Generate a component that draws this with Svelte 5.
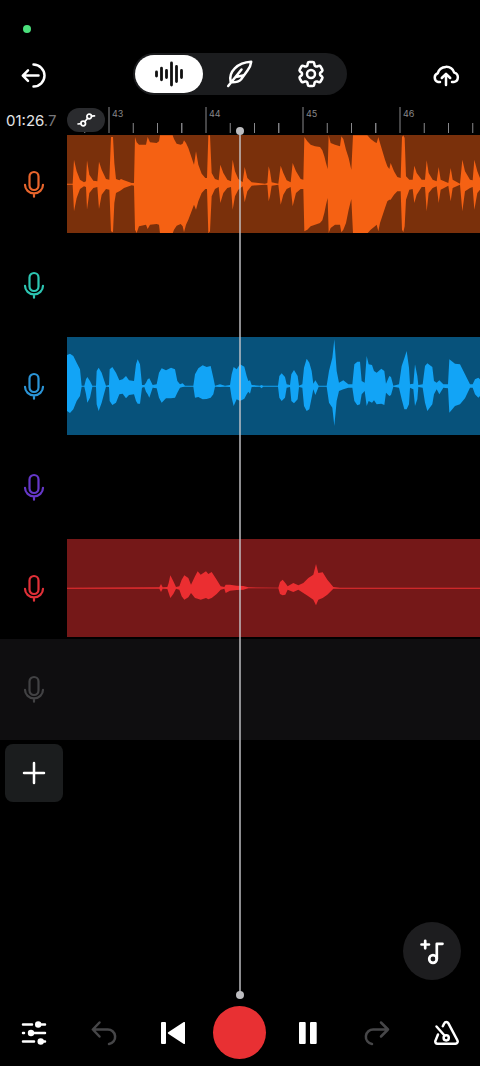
<script>
  const BARS = [43, 44, 45, 46];
  const BAR_WIDTH = 97;
  const FIRST_BAR = 42;
  const VIEW_WIDTH = 413;

  const pct = (x) => `${(x / VIEW_WIDTH) * 100}%`;

  // each peak: x, top, bottom. Three units per pixel
  const tracks = [
    {
      name: 'Vocals 1', color: '#e8652c', tone: 'orange',
      takes: [
        { start: -21, axis: 163, peaks: [
          [21,162,165],[38,162,165],[42,90,245],[50,125,205],[60,150,178],[72,158,170],[78,155,172],[81,92,240],[88,135,190],
          [100,153,175],[112,155,172],[117,96,238],[125,120,195],[138,148,178],[148,150,180],[153,22,305],[159,22,308],
          [163,100,220],[168,148,190],[178,152,185],[183,148,182],[192,152,175],[215,160,167],[222,160,168],[225,22,300],
          [230,38,310],[237,45,290],[258,45,285],[263,22,298],[270,38,285],[290,40,283],[297,35,285],[300,17,311],
          [338,17,311],[342,28,300],[350,42,288],[362,45,283],[368,42,290],[372,32,308],[378,40,285],[385,55,270],
          [402,105,225],[408,65,240],[415,105,215],[425,132,190],[436,145,178],[441,145,178],[445,17,311],[450,17,305],
          [455,130,200],[465,148,178],[476,152,172],[481,105,220],[490,130,190],[502,150,175],[513,155,172],[518,90,240],
          [525,125,200],[535,148,180],[548,158,170],[554,112,218],[562,145,185],[575,158,168],[615,162,165],[622,160,166],[626,110,215]
        ] },
        { start: 609, axis: 163, peaks: [
          [0,125,200],[5,158,168],[25,162,165],[32,108,225],[40,130,195],[50,152,178],[62,158,172],[68,100,230],[78,125,190],
          [92,148,178],[100,150,178],[103,22,305],[112,35,300],[122,45,290],[135,50,285],[150,52,280],[157,62,272],
          [163,80,250],[168,100,225],[173,118,205],[176,17,310],[182,40,295],[195,45,285],[210,50,285],[214,20,308],
          [220,28,300],[228,60,280],[236,85,240],[244,120,208],[249,17,311],[292,17,311],[302,28,300],[315,38,290],
          [320,40,285],[325,22,305],[330,40,280],[345,90,235],[352,110,215],[358,118,210],[362,100,210],[372,125,195],
          [382,142,185],[392,145,185],[396,22,300],[400,17,308],[404,25,290],[408,140,210],[418,150,180],[428,150,178],
          [433,108,220],[440,130,195],[455,150,172],[465,150,172],[470,92,245],[476,130,190],[488,150,175],[500,155,170],
          [506,112,220],[512,150,180],[535,160,168],[542,115,215],[548,150,175],[570,162,165],[577,90,245],[585,125,185],
          [600,150,175],[608,152,172],[613,90,240],[622,125,190],[630,145,180]
        ] }
      ]
    },
    { name: 'Vocals 2', color: '#2dc5b2' },
    {
      name: 'Vocals 3', color: '#2b94d6', tone: 'blue',
      takes: [
        { start: -21, axis: 155, peaks: [
          [21,62,230],[30,58,236],[40,65,225],[50,85,200],[60,105,185],[65,154,157],[73,154,157],[78,135,180],[82,128,205],
          [90,140,190],[97,154,157],[108,154,157],[110,110,210],[116,100,230],[125,115,205],[133,140,175],[138,154,157],
          [147,152,158],[149,105,200],[157,98,212],[168,115,205],[178,138,180],[188,135,178],[198,125,192],[207,138,182],
          [222,140,180],[228,90,200],[233,75,208],[240,90,208],[246,152,160],[253,152,158],[258,145,172],[263,135,180],
          [268,132,190],[278,152,160],[290,150,162],[297,115,190],[305,102,205],[318,108,192],[333,100,192],[345,105,190],
          [352,140,175],[360,150,160],[368,147,158],[375,154,157],[400,154,157],[405,120,190],[415,102,188],[428,93,195],
          [440,98,194],[452,95,190],[460,130,180],[465,154,157],[480,150,158],[495,154,157],[510,152,158],[515,120,190],
          [521,98,215],[530,105,195],[540,90,200],[553,97,193],[560,125,180],[565,140,172],[570,138,178],[575,152,158],
          [600,154,157],[604,152,162],[610,154,157]
        ] },
        { start: 609, axis: 155, peaks: [
          [0,154,157],[24,154,157],[28,125,190],[35,117,200],[45,128,190],[50,150,160],[60,152,158],[64,120,200],[72,107,207],
          [83,125,195],[87,154,158],[97,150,160],[102,100,215],[110,73,230],[118,85,225],[125,110,190],[130,148,165],
          [136,138,182],[146,154,157],[170,154,157],[177,110,205],[187,70,220],[193,15,275],[200,110,200],[207,145,170],
          [220,138,165],[235,150,160],[247,150,160],[253,90,200],[262,82,213],[270,82,210],[275,140,180],[284,145,170],
          [290,65,215],[296,90,200],[306,92,205],[312,110,198],[320,115,210],[334,103,208],[343,110,212],[348,148,175],
          [358,125,185],[363,128,182],[370,154,157],[387,150,160],[395,95,195],[403,72,225],[410,50,225],[417,100,210],
          [420,150,160],[430,148,165],[435,90,215],[442,125,195],[445,152,158],[458,150,160],[465,95,205],[472,87,230],
          [487,98,210],[492,140,180],[500,145,165],[508,138,180],[520,150,160],[534,150,162],[538,75,235],[555,88,215],
          [570,90,210],[585,120,192],[600,150,160],[608,150,160],[615,135,180],[625,130,190],[630,135,185]
        ] }
      ]
    },
    { name: 'Vocals 4', color: '#6538c8' },
    {
      name: 'Vocals 5', color: '#e03038', tone: 'red',
      takes: [
        { start: 189, axis: 160, peaks: [
          [-189,159,162],[88,158,162],[93,148,172],[98,158,162],[112,157,163],[116,145,175],[121,122,190],[130,140,178],[138,157,162],
          [148,155,165],[155,135,185],[163,122,195],[175,130,188],[183,150,175],[195,125,190],[203,110,192],[212,120,195],
          [228,110,190],[235,118,194],[245,112,190],[260,135,178],[272,155,165],[283,157,162],[287,150,175],[300,150,168],
          [320,153,166],[340,154,165],[355,158,161],[445,159,161],[450,142,178],[458,135,182],[466,145,180],[473,155,165],
          [490,145,172],[505,152,165],[520,145,175],[535,130,185],[550,120,195],[558,88,212],[565,115,195],[578,113,190],
          [592,135,180],[610,157,162],[630,159,162],[1050,159,162]
        ] }
      ]
    },
    { name: 'New track', color: '#424244', empty: true }
  ];

  const ticks = [-0.25, 0.25, 0.5, 0.75].flatMap((q) => BARS.map((_, i) => FIRST_BAR + (i + q) * BAR_WIDTH))
    .filter((x) => x > 0 && x < VIEW_WIDTH);

  let view = $state('tracks');

  function outline(takes) {
    const pts = takes.flatMap((t) => t.peaks.map(([x, a, b]) => [x + t.start, a - t.axis + 147, b - t.axis + 147]));
    const top = pts.map(([x, a]) => `${x},${a}`);
    const bottom = pts.map(([x, , b]) => `${x},${b}`).reverse();
    return [...top, ...bottom].join(' ');
  }
</script>

<div class="app">
  <div class="status"><span class="live-dot"></span></div>

  <header class="topbar">
    <button class="icon-btn" aria-label="Exit">
      <svg width="28" height="28" viewBox="0 0 28 28" class="line">
        <path d="M13.5 4.600a11 11 0 0 1 0 22M18.500 15.600H3M8 10.400L2.800 15.600l5.200 5.200" />
      </svg>
    </button>

    <nav class="tabs">
      <button class="tab" class:active={view === 'tracks'} aria-label="Tracks" onclick={() => (view = 'tracks')}>
        <svg width="28" height="28" viewBox="0 0 28 28" class="line bars">
          <path d="M1.5 12v4M6.500 8.200v11.600M11.500 10.500v7M16.500 3v22M21.500 6.500v15M26.500 10.500v7" />
        </svg>
      </button>
      <button class="tab" class:active={view === 'lyrics'} aria-label="Lyrics" onclick={() => (view = 'lyrics')}>
        <svg width="28" height="28" viewBox="0 0 28 28" class="line">
          <path d="M2.200 26L15.500 9.500M4.600 21.500C2.500 12 11 2.500 25.200 1.800C24.800 5.500 23 8.500 21.500 10.500L15 19.500C12.500 22.200 8.500 22.500 4.800 22.300M9.800 17L17 15.500" />
        </svg>
      </button>
      <button class="tab" class:active={view === 'settings'} aria-label="Settings" onclick={() => (view = 'settings')}>
        <svg width="32" height="32" viewBox="0 0 24 24" class="line gear">
          <path d="M9.594 3.94c.09-.542.56-.94 1.11-.94h2.593c.55 0 1.02.398 1.11.94l.213 1.281c.063.374.313.686.645.87.074.04.147.083.22.127.325.196.72.257 1.075.124l1.217-.456a1.125 1.125 0 0 1 1.37.49l1.296 2.247a1.125 1.125 0 0 1-.26 1.431l-1.003.827c-.293.241-.438.613-.43.992a7.723 7.723 0 0 1 0 .255c-.008.378.137.75.43.991l1.004.827c.424.35.534.955.26 1.43l-1.298 2.247a1.125 1.125 0 0 1-1.369.491l-1.217-.456c-.355-.133-.75-.072-1.076.124a6.47 6.47 0 0 1-.22.128c-.331.183-.581.495-.644.869l-.213 1.281c-.09.543-.56.94-1.11.94h-2.594c-.55 0-1.019-.398-1.11-.94l-.213-1.281c-.062-.374-.312-.686-.644-.87a6.52 6.52 0 0 1-.22-.127c-.325-.196-.72-.257-1.076-.124l-1.217.456a1.125 1.125 0 0 1-1.369-.49l-1.297-2.247a1.125 1.125 0 0 1 .26-1.431l1.004-.827c.292-.24.437-.613.43-.991a6.932 6.932 0 0 1 0-.255c.007-.38-.138-.751-.43-.992l-1.004-.827a1.125 1.125 0 0 1-.26-1.43l1.297-2.247a1.125 1.125 0 0 1 1.37-.491l1.216.456c.356.133.751.072 1.076-.124.072-.044.146-.086.22-.128.332-.183.582-.495.644-.869l.214-1.28Z" />
          <circle cx="12" cy="12" r="3" />
        </svg>
      </button>
    </nav>

    <button class="icon-btn" aria-label="Upload">
      <svg width="28" height="28" viewBox="0 0 28 28" class="line">
        <path d="M8 22H6.200A4.600 4.600 0 0 1 5.800 13.200A8.600 8.600 0 0 1 22.200 12.600A4.800 4.800 0 0 1 21.800 22H20M14 25V14.500M9.800 18L14 13.800l4.200 4.200" />
      </svg>
    </button>
  </header>

  <main class="workspace">
    <div class="timeline">
      <div class="time">01:26<span>.7</span></div>
      <div class="ruler">
        <svg width="100%" height="30">
          {#each BARS as bar, i}
            <line class="tick" x1={pct(FIRST_BAR + i * BAR_WIDTH)} x2={pct(FIRST_BAR + i * BAR_WIDTH)} y1="3" y2="29" />
            <text class="bar-label" x={pct(FIRST_BAR + i * BAR_WIDTH)} y="13" dx="3">{bar}</text>
          {/each}
          {#each ticks as x}
            <line class="tick" x1={pct(x)} x2={pct(x)} y1="19" y2="29" />
          {/each}
        </svg>
        <button class="automation" aria-label="Automation">
          <svg width="20" height="16" viewBox="0 0 20 16" class="line thin">
            <circle cx="7.200" cy="11.500" r="2.300" />
            <circle cx="13.200" cy="4.500" r="2.300" />
            <path d="M2 12l2.900-.3M8.700 9.700l3-3.400M15.500 4.200l3-.4" />
          </svg>
        </button>
      </div>
    </div>

    {#each tracks as track}
      <section class="track" class:empty={track.empty}>
        <button class="mic" aria-label={track.name}>
          <svg width="20" height="28" viewBox="0 0 20 28" style:color={track.color}>
            <rect x="5.500" y="2" width="9" height="18" rx="4.500" />
            <path d="M1 14.800a9 8.600 0 0 0 18 0M10 23.500v3.200" />
          </svg>
        </button>
        {#if track.takes}
          <div class="clip {track.tone}">
            <svg viewBox="0 0 1239 294" preserveAspectRatio="none">
              <polygon points={outline(track.takes)} />
            </svg>
          </div>
        {/if}
      </section>
    {/each}

    <button class="add-track" aria-label="Add track">
      <svg width="24" height="24" viewBox="0 0 24 24" class="line"><path d="M12 2v20M2 12h20" /></svg>
    </button>

    <div class="playhead"></div>

    <button class="fab" aria-label="Add loop">
      <svg width="28" height="28" viewBox="0 0 28 28" class="line bold">
        <path d="M3.500 7.500h7.500M7.200 3.800v7.500M18.800 22V6.800H24.500" />
        <circle cx="15" cy="22" r="3.800" />
      </svg>
    </button>
  </main>

  <footer class="transport">
    <button class="icon-btn" aria-label="Mixer">
      <svg width="28" height="28" viewBox="0 0 28 28" class="line">
        <path d="M3 5.500h9M17 5.500h8M3 14h1M11 14h14M3 22.500h11M20 22.500h5" />
        <circle class="dot" cx="18.200" cy="5.500" r="3.200" />
        <circle class="dot" cx="11" cy="14" r="3.200" />
        <circle class="dot" cx="20.700" cy="22.500" r="3.200" />
      </svg>
    </button>
    <button class="icon-btn muted" aria-label="Undo">
      <svg width="28" height="28" viewBox="0 0 28 28" class="line">
        <path d="M10.500 3.500L3.800 10.500l6.700 7M4 10.500h14.500a7.300 7.300 0 0 1 1.500 14.500" />
      </svg>
    </button>
    <button class="icon-btn" aria-label="Back to start">
      <svg width="28" height="28" viewBox="0 0 28 28" fill="currentColor">
        <rect x="4" y="3" width="5" height="22" rx="1" />
        <path d="M28 3.800v20.400a.8.8 0 0 1-1.200.7L11.200 14.700a.9.9 0 0 1 0-1.400L26.800 3.100a.8.8 0 0 1 1.200.7z" />
      </svg>
    </button>
    <button class="record" aria-label="Record"></button>
    <button class="icon-btn" aria-label="Pause">
      <svg width="28" height="28" viewBox="0 0 28 28" fill="currentColor">
        <rect x="4" y="3" width="6.700" height="22" rx="1" />
        <rect x="15" y="3" width="6.700" height="22" rx="1" />
      </svg>
    </button>
    <button class="icon-btn muted" aria-label="Redo">
      <svg width="28" height="28" viewBox="0 0 28 28" class="line">
        <path d="M18 3.500L25 10.500l-7 7M25 10.500H10.500A7.300 7.300 0 0 0 9 25" />
      </svg>
    </button>
    <button class="icon-btn" aria-label="Metronome">
      <svg width="28" height="28" viewBox="0 0 28 28" class="line">
        <path d="M10.800 7.200L12.300 4.200a2.200 2.200 0 0 1 4 0L25.500 21.500a2.300 2.300 0 0 1-2 3.300H5.500a2.200 2.200 0 0 1-2-3.200L6 15.500M4.500 7.500l8 9" />
        <circle cx="14.200" cy="18.800" r="2.600" />
      </svg>
    </button>
  </footer>
</div>

<style>
  :global(body) { background: #000; }
  .app {
    display: flex; flex-direction: column; min-height: 100vh;
    background: #000; color: #fff;
    font-family: Inter, "Liberation Sans", sans-serif;
  }
  button {
    border: none; background: none; padding: 0; color: inherit; cursor: pointer;
    display: flex; align-items: center; justify-content: center;
  }
  svg { display: block; }
  .line { fill: none; stroke: currentColor; stroke-width: 2.5; stroke-linecap: round; stroke-linejoin: round; }
  .line.gear { stroke-width: 1.9; }
  .line.thin { stroke-width: 1.7; }
  .line.bars { stroke-width: 2.8; }
  .line.bold { stroke-width: 2.7; }
  .dot { fill: currentColor; stroke: none; }

  .status { height: 53px; padding: 25px 23px 0; box-sizing: border-box; }
  .live-dot { display: block; width: 8px; height: 8px; border-radius: 50%; background: #4be07c; }

  .topbar { display: flex; align-items: center; justify-content: space-between; height: 42px; }
  .icon-btn { width: 68px; height: 42px; }
  .tabs { display: flex; padding: 2px; border-radius: 21px; background: #1b1c1e; gap: 3px; }
  .tab { width: 68px; height: 38px; border-radius: 19px; }
  .tab.active { background: #fff; color: #111; }

  .workspace { flex: 1; position: relative; padding: 9px 0 12px; }
  .timeline { display: flex; height: 30px; }
  .time {
    width: 67px; padding-left: 6px; box-sizing: border-box; flex-shrink: 0;
    font-size: 15px; line-height: 33px; color: #e4e4e6;
  }
  .time span { color: #77777a; }
  .ruler { flex: 1; position: relative; }
  .tick { stroke: #88888b; stroke-width: 1; }
  .bar-label { fill: #88888b; font-size: 9px; }
  .automation {
    position: absolute; left: 0; top: 4px;
    width: 38px; height: 24px; border-radius: 12px; background: #2a2b2e;
  }

  .track { display: flex; height: 101px; padding: 1px 0 2px; box-sizing: border-box; }
  .track.empty { background: #0f0e10; }
  .mic { width: 67px; flex-shrink: 0; }
  .mic svg { fill: none; stroke: currentColor; stroke-width: 2.2; stroke-linecap: round; overflow: visible; }
  .clip { flex: 1; }
  .clip svg { width: 100%; height: 98px; }
  .orange { background: #7a300b; fill: #f56113; }
  .blue { background: #07527b; fill: #12a4f6; }
  .red { background: #751818; fill: #eb2e31; }

  .add-track { width: 58px; height: 58px; margin: 4px 5px; border-radius: 8px; background: #1b1d1e; }

  .playhead {
    position: absolute; top: 36px; bottom: 5px; left: 50%;
    width: 2px; margin-left: -1px; background: rgba(200,200,204,.7);
  }
  .playhead::before, .playhead::after {
    content: ''; position: absolute; left: -3px;
    width: 8px; height: 8px; border-radius: 50%; background: #bdbdc0;
  }
  .playhead::before { top: -4px; }
  .playhead::after { bottom: -4px; }

  .fab {
    position: absolute; right: 19px; bottom: 20px;
    width: 58px; height: 58px; border-radius: 50%; background: #1d1d1f;
  }

  .transport {
    display: grid; grid-template-columns: repeat(7, 1fr);
    align-items: center; justify-items: center; padding: 6px 0 7px;
  }
  .transport .icon-btn { width: 44px; }
  .muted { color: #464648; }
  .record { width: 53px; height: 53px; border-radius: 50%; background: #e83033; }
</style>
